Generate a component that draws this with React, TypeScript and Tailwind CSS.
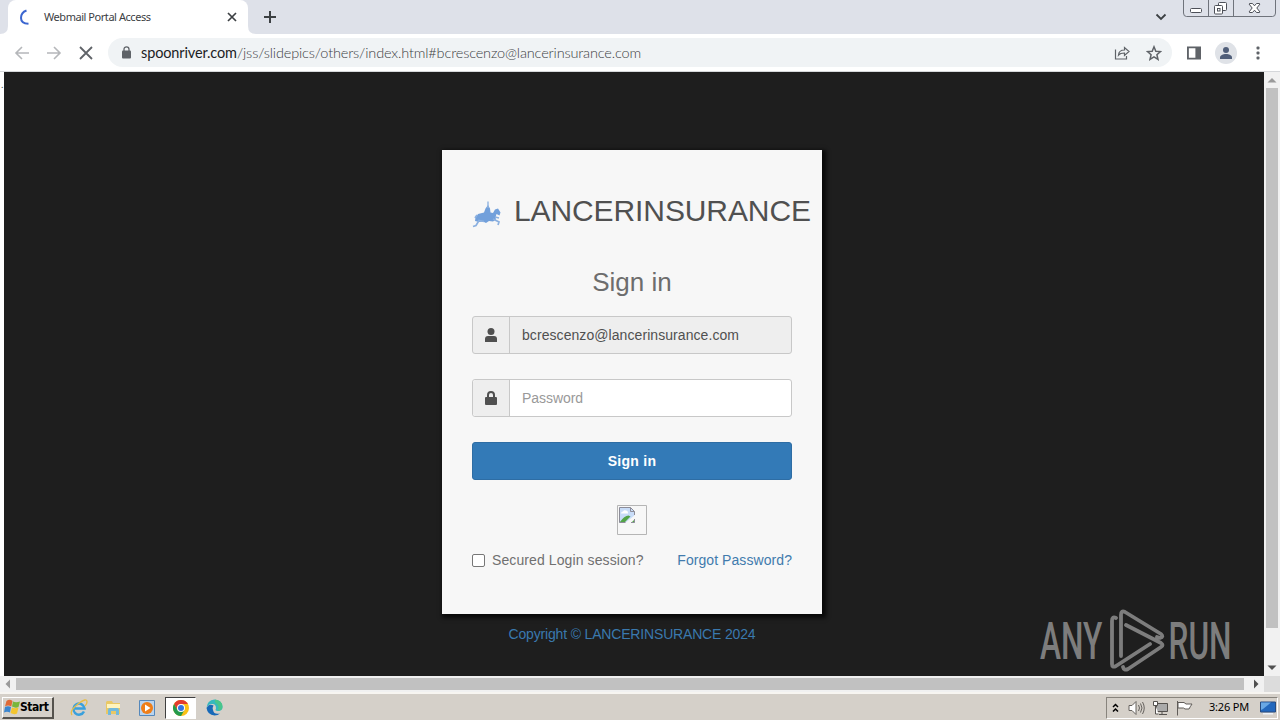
import React from "react";

function Tri({ d, c = "#505050" }: { d: string; c?: string }) {
  return (
    <svg width="16" height="16" viewBox="0 0 16 16" fill={c} className="shrink-0">
      <path d={d} />
    </svg>
  );
}

function TabStrip() {
  return (
    <div className="flex h-[34px] shrink-0 bg-[#dee1e9]">
      <div className="flex w-2 items-end">
        <svg width="8" height="34"><path d="M8 26v8H0q8 0 8-8" fill="#fff" /></svg>
      </div>
      <div className="flex w-60 items-center rounded-t-lg bg-white pl-[11px]">
        <svg width="16" height="16" viewBox="0 0 16 16" fill="none" stroke="#3b66d0" strokeWidth="2">
          <path d="M7.500 1.500Q2 3.500 2 9T9.500 14.800" />
        </svg>
        <span className="ml-[9px] w-[173px] whitespace-nowrap font-['Noto_Sans',sans-serif] text-[11px] tracking-[-0.45px] text-[#3c4043]">
          Webmail Portal Access
        </span>
        <svg className="ml-[10px]" width="10" height="10" viewBox="0 0 10 10" stroke="#3c4043" strokeWidth="1.7">
          <path d="M1 1l8 8M9 1L1 9" />
        </svg>
      </div>
      <div className="flex w-2 items-end">
        <svg width="8" height="34"><path d="M0 26v8h8q-8 0-8-8" fill="#fff" /></svg>
      </div>
      <div className="flex items-center pl-2">
        <svg width="12" height="12" viewBox="0 0 12 12" stroke="#3c4043" strokeWidth="2"><path d="M6 0v12M0 6h12" /></svg>
      </div>
      <div className="flex grow items-start justify-end">
        <svg className="mr-[16px] mt-[13px]" width="12" height="8" viewBox="0 0 12 8" fill="none" stroke="#3c4043" strokeWidth="1.8">
          <path d="M1.5 1.5L6 6l4.500-4.500" />
        </svg>
        <svg className="mr-1" width="93" height="17" viewBox="0 0 93 17" fill="none" stroke="#6f737b">
          <path d="M.5 0v13q0 3.500 3 3.500h86q3 0 3-3.500V0M25.500 0v16M50.500 0v16" />
          <rect x="7.500" y="8.500" width="11" height="4" rx="1" fill="#fff" stroke="#4d5058" />
          <g fill="#fff" stroke="#4d5058">
            <rect x="35.500" y="2.500" width="8" height="8" rx="1" />
            <rect x="31.500" y="5.500" width="8" height="8.500" rx="1" />
            <rect x="34.500" y="8.500" width="2.500" height="2.500" />
            <path d="M66.500 3.500h3l2 2.300 2-2.300h3l.5.5-3.200 4 3.200 4-.5.5h-3l-2-2.300-2 2.300h-3l-.5-.5 3.200-4-3.200-4z" />
          </g>
        </svg>
      </div>
    </div>
  );
}

function Toolbar() {
  return (
    <div className="flex h-[38px] shrink-0 items-center border-b border-[#d5d7da] bg-white">
      <svg className="ml-[14px]" width="80" height="16" viewBox="0 0 80 16" fill="none" strokeWidth="1.600">
        <g stroke="#b5b7ba">
          <path d="M15 8H2M8 2L2 8l6 6M33 8h13M40 2l6 6-6 6" />
        </g>
        <path d="M66 2l12 12M78 2L66 14" stroke="#5f6368" strokeWidth="1.800" />
      </svg>
      <div className="ml-[14px] flex h-[29px] w-[1064px] items-center rounded-full bg-[#f0f3f5] pl-[14px] pr-[10px]">
        <svg width="9" height="13" viewBox="0 0 9 13">
          <rect y="4.500" width="9" height="8" rx="1" fill="#5f6368" />
          <path d="M2 5V3.300a2.500 2.500 0 0 1 5 0V5" fill="none" stroke="#5f6368" strokeWidth="1.300" />
        </svg>
        <span className="ml-[10px] grow whitespace-nowrap font-['Lato',sans-serif] text-[14.5px] font-light tracking-[-0.15px] text-[#3c4043]">
          <span className="font-normal tracking-[-0.13px] text-[#202124]">spoonriver.com</span>/jss/slidepics/others/index.html#bcrescenzo@lancerinsurance.com
        </span>
        <svg width="16" height="16" viewBox="0 0 16 16" fill="none" stroke="#5f6368" strokeWidth="1.200">
          <path d="M1.500 4.500v9.500h11v-3M4.500 10c.3-3.500 2.500-5 6-5V2.500l4.500 4-4.500 4V8c-3 0-4.700.4-6 2z" />
        </svg>
        <svg className="ml-4" width="16" height="16" viewBox="0 0 16 16" fill="none" stroke="#5f6368" strokeWidth="1.500">
          <path d="M8 1.800l1.800 4.400 4.700.4-3.600 3.100 1.100 4.600L8 11.800l-4 2.500 1.100-4.600-3.600-3.100 4.700-.4z" />
        </svg>
      </div>
      <svg className="ml-[15px]" width="14" height="14" viewBox="0 0 15 14">
        <path d="M1 1h13v12H1z" fill="#fff" stroke="#5f6368" strokeWidth="2" />
        <path d="M9 1h5v12H9z" fill="#5f6368" />
      </svg>
      <svg className="ml-[14px]" width="22" height="22" viewBox="0 0 22 22">
        <circle cx="11" cy="11" r="11" fill="#dfe2e7" />
        <g fill="#505e79"><circle cx="11" cy="8" r="3" /><path d="M5 17v-1.500c0-2 3-3.500 6-3.500s6 1.500 6 3.500V17z" /></g>
      </svg>
      <svg className="ml-[19px]" width="4" height="14" viewBox="0 0 4 14" fill="#5f6368">
        <rect x=".5" y=".5" width="3" height="3" rx="1" /><rect x=".5" y="5.500" width="3" height="3" rx="1" /><rect x=".5" y="10.500" width="3" height="3" rx="1" />
      </svg>
    </div>
  );
}

function Rider() {
  return (
    <svg className="mt-[5px] shrink-0" width="30" height="30" viewBox="0 0 30 30">
      <path d="M4 17l2-3 6-1.500 1.500-4L16 5l2 3.500.5 4L21 13l2-3.500L26 8.500l2.500 4-1 3-3-1.500-1 3.500.5 2-3 2-4-.5-3 2-3-1.500-4 .5-4-1 .5-3.500z" fill="#72a0db" />
      <path d="M1 26.500l3-1 3-5 5 1M21 19l6 3-1 3M3 18l2-3M23 17l4 1" fill="none" stroke="#8bb0e0" strokeWidth="1.700" />
      <path d="M16 1.500V8" stroke="#91b4e0" strokeWidth="1.400" />
    </svg>
  );
}

function LoginCard() {
  return (
    <div className="h-[464px] w-[380px] shrink-0 bg-[#f7f7f7] px-[30px] font-['Liberation_Sans',sans-serif] text-[14px] text-[#707070] shadow-[2px_2px_4px_2px_rgba(0,0,0,0.7)]">
      <div className="flex h-[124px] items-center whitespace-nowrap text-[#505050]">
        <Rider />
        <span className="ml-3 pb-[2px] text-[30px] leading-none tracking-[-0.1px]">LANCERINSURANCE</span>
      </div>
      <div className="h-[42px] text-center text-[26px] leading-[17px] text-[#6d6d6d]">Sign in</div>
      <div className="flex h-[38px] rounded-[3px] border border-[#c8c8c8] bg-[#eee]">
        <div className="flex w-[37px] items-center justify-center border-r border-[#c8c8c8]">
          <svg width="12" height="14" viewBox="0 0 12 14" fill="#505050">
            <circle cx="6" cy="3.500" r="3.500" /><path d="M0 14v-3q0-3 3-3h6q3 0 3 3v3z" />
          </svg>
        </div>
        <span className="flex items-center pl-3 text-[14px] tracking-[0.07px] text-[#505050]">bcrescenzo@lancerinsurance.com</span>
      </div>
      <div className="mt-[25px] flex h-[38px] rounded-[3px] border border-[#c8c8c8] bg-white">
        <div className="flex w-[37px] items-center justify-center rounded-l-[3px] border-r border-[#c8c8c8] bg-[#eee]">
          <svg width="12" height="14" viewBox="0 0 12 14">
            <rect y="6" width="12" height="8" rx="1" fill="#505050" />
            <path d="M3 7V4a3 3 0 0 1 6 0v3" fill="none" stroke="#505050" strokeWidth="2" />
          </svg>
        </div>
        <span className="flex items-center pl-3 tracking-[-0.05px] text-[#999]">Password</span>
      </div>
      <button className="mt-[25px] flex h-[38px] w-full items-center justify-center rounded-[3px] border border-[#2e6da4] bg-[#337ab7] text-[14px] font-bold tracking-[0.28px] text-white">
        Sign in
      </button>
      <svg className="mx-auto mt-[25px]" width="30" height="30" viewBox="0 0 30 30">
        <path d="M.5.5h29v29H.5z" fill="none" stroke="#b5b5b5" />
        <path d="M2.500 2.500h11l4 4v11h-15z" fill="#c8dcf8" />
        <path d="M4 8.500q0-2 2-2 1-2 3-1 2 0 2 3z" fill="#fff" />
        <path d="M2.500 17.500q5-7 9-7l2 1-6 6z" fill="#52a447" />
        <path d="M17.500 17.500v-4l-4 4" fill="#52a447" />
        <path d="M8 18l10-8v4l-4 4z" fill="#f7f7f7" />
        <path d="M17.500 10V6.500l-4-4h-11v15h6M13.500 2.500v4h4M14 17.500h3.500V14" fill="none" stroke="#8c8c98" />
      </svg>
      <div className="mt-4 flex h-[19px] items-center">
        <span className="h-[13px] w-[13px] rounded-[2px] border border-[#777] bg-white" />
        <span className="ml-[7px] pb-px leading-[18px] tracking-[0.1px]">Secured Login session?</span>
        <span className="ml-auto pb-px leading-[18px] tracking-[0.07px] text-[#417bad]">Forgot Password?</span>
      </div>
    </div>
  );
}

function AnyRun() {
  return (
    <div className="absolute left-[1031px] top-[536px] flex h-[66px] w-[204px] items-center font-['Roboto',sans-serif] text-[51px] font-medium leading-none text-[#7d7d7d]">
      <span className="w-[74px] shrink-0 origin-left scale-x-[0.62] pl-2">ANY</span>
      <svg className="shrink-0" width="56" height="64" viewBox="0 0 56 64" fill="none" stroke="#7d7d7d" strokeWidth="3.800" strokeLinejoin="round" strokeLinecap="round">
        <path d="M7 9q-4-2-4 3v43q0 4 4 2l34-22M12 47V6q0-5 4-3l36 22q3 3-1 4l-3-1M17 16l35 18q3 2 0 4L19 60q-4 2-5-2" />
      </svg>
      <span className="ml-px w-[60px] shrink-0 origin-left scale-x-[0.62] pl-1">RUN</span>
    </div>
  );
}

function Viewport() {
  return (
    <div className="flex h-[620px] shrink-0 flex-col bg-white">
      <div className="flex h-[604px]">
        <div className="w-1 shrink-0 pl-px pt-[8px] text-[9px] leading-none text-[#333]">.</div>
        <div className="relative flex w-[1260px] flex-col items-center bg-[#1e1e1e] pr-1 pt-[78px]">
          <LoginCard />
          <span className="mt-[11px] font-['Liberation_Sans',sans-serif] text-[14px] leading-[18px] tracking-[-0.17px] text-[#3a79ae]">
            Copyright © LANCERINSURANCE 2024
          </span>
          <AnyRun />
        </div>
        <div className="flex w-4 flex-col bg-[#f1f1f1]">
          <Tri d="M3.500 10.500h9L8 6z" c="#9a9a9a" />
          <div className="mx-[2px] h-[540px] bg-[#c1c1c1]" />
          <div className="grow" />
          <Tri d="M3.500 5.500h9L8 10z" />
        </div>
      </div>
      <div className="flex h-4 bg-[#f1f1f1]">
        <Tri d="M10 3.500v9L5.500 8z" c="#9a9a9a" />
        <div className="my-[2px] w-[1228px] bg-[#c1c1c1]" />
        <div className="w-1" />
        <Tri d="M6 3.500v9L10.500 8z" />
        <div className="w-4 bg-[#dcdcdc]" />
      </div>
    </div>
  );
}

function Flag() {
  return (
    <svg width="16" height="16" viewBox="0 0 16 16" className="shrink-0">
      <path d="M2.500 2q3-2.500 6 0L7.300 7.500Q4 5.500 1 7.500z" fill="#df6a37" />
      <path d="M9 2.500q3 1.500 7 0L14.500 8q-3 1.500-6.500-.5z" fill="#79b63b" />
      <path d="M1 8q3-1.500 6 0l-1 5.500Q3 12 0 13.500z" fill="#3b86cf" />
      <path d="M8 8.500q3 1.500 6.500 0L13 14.500q-3 1.500-6.500-.5z" fill="#f3c52f" />
    </svg>
  );
}

function Taskbar() {
  return (
    <div className="flex h-7 shrink-0 items-center border-t-2 border-[#f7f5f1] bg-[#d5d0c9] pt-px">
      <div className="ml-[2px] flex h-[22px] w-[52px] items-center border border-b-2 border-r-2 border-b-[#55524d] border-l-white border-r-[#55524d] border-t-white pl-px">
        <Flag />
        <span className="font-['DejaVu_Sans_Condensed','DejaVu_Sans',sans-serif] text-[12px] font-bold tracking-[-0.45px] text-black">Start</span>
      </div>
      <svg className="ml-[16px]" width="18" height="18" viewBox="0 0 18 18" fill="none">
        <path d="M14 12.500A5.500 5.500 0 1 1 14.500 9.500H5" stroke="#3aa0dc" strokeWidth="2.500" />
        <path d="M2 16Q-1 12 8 5T17 3q0 2-2 4" stroke="#e8bd45" strokeWidth="1.300" />
      </svg>
      <svg className="ml-[17px]" width="17" height="18" viewBox="0 0 17 18">
        <path d="M1 3l1-1h5l1 2h7v11H1z" fill="#e9c865" />
        <path d="M2 5h13v4H2z" fill="#fff4bd" />
        <path d="M3 16v-5q0-2 2-2h7q2 0 2 2v5h-3v-4H6v4z" fill="#72b9dc" />
      </svg>
      <svg className="ml-[17px]" width="16" height="16" viewBox="0 0 16 16">
        <path d="M.5.5h15v15H.5z" fill="#b9d4ef" stroke="#5588bb" />
        <circle cx="8" cy="8" r="6" fill="#ef7e18" /><path d="M6 4.500v7L11.500 8z" fill="#fff" />
      </svg>
      <div className="ml-[10px] flex h-[22px] w-[31px] items-center justify-center border border-b-white border-l-[#404040] border-r-white border-t-[#404040] bg-white">
        <svg width="16" height="16" viewBox="0 0 16 16">
          <circle cx="8" cy="8" r="8" fill="#fbc116" />
          <path d="M1.070 4A8 8 0 0 1 14.930 4H8L4.500 10z" fill="#e33b2e" />
          <path d="M1.070 4A8 8 0 0 0 8 16l3.500-6h-7z" fill="#249a4d" />
          <circle cx="8" cy="8" r="4" fill="#fff" /><circle cx="8" cy="8" r="3" fill="#3475e0" />
        </svg>
      </div>
      <svg className="ml-[10px]" width="17" height="17" viewBox="0 0 17 17">
        <path d="M.5 9Q1 1 8.500.5q7.500.5 8 7.500 0 4-4.500 4-3.500 0-2-2.500Q10 4.500 6 5 2 5 .5 9" fill="#35b8be" />
        <path d="M.5 9Q3 4 7.500 6.500 6 9 7 11q1 5 7 3.500-2 2-5.500 2-7-.5-8-7.500" fill="#1769b8" />
        <path d="M9 .5q7 .5 7.500 7 0 4-4.500 4 2-5-3-8" fill="#48c58c" />
      </svg>
      <div className="ml-auto mr-[2px] flex h-[22px] w-[172px] items-center border border-b-white border-l-[#88847d] border-r-white border-t-[#88847d]">
        <svg className="ml-[5px]" width="7" height="10" viewBox="0 0 7 10" fill="none" stroke="#000" strokeWidth="1.500"><path d="M1 4l2.500-2.500L6 4M1 8.500L3.500 6 6 8.500" /></svg>
        <svg className="ml-[9px]" width="17" height="16" viewBox="0 0 17 16" fill="none" stroke="#66625e">
          <path d="M1 5.500h3l4-4v13l-4-4H1z" fill="#fff" /><path d="M10.500 5q2 3 0 6M12.500 3.500q3 4.500 0 9M14.500 2q3.500 6 0 12" />
        </svg>
        <svg className="ml-[7px]" width="17" height="16" viewBox="0 0 17 16" fill="#fff" stroke="#55524f">
          <path d="M4.500 3.500h11v8h-11z" fill="#aaa" /><path d="M7 14.500h8M10 12v2M3.500 5v9h3" /><path d="M1.500 1.500h4v4h-4z" />
        </svg>
        <svg className="ml-[7px]" width="17" height="16" viewBox="0 0 17 16" fill="#fff" stroke="#605c58">
          <path d="M1.500 1v14.500M2 2.500h6l2 1.500h6q-2 3-3 5H9L7.500 8H2z" />
        </svg>
        <span className="ml-[16px] whitespace-nowrap font-['Noto_Sans',sans-serif] text-[11px] tracking-[-0.2px] text-black">3:26 PM</span>
        <svg className="ml-[11px] shrink-0" width="16" height="14" viewBox="0 0 16 14">
          <path d="M.5 1h15v10H.5z" fill="#2368bd" stroke="#264b80" /><path d="M1 1.500h10L3 8 1 9z" fill="#69a8e5" /><path d="M3 12h10v1.500H3z" fill="#edf2f8" />
        </svg>
      </div>
    </div>
  );
}

export default function App() {
  return (
    <div className="flex h-[720px] w-[1280px] flex-col overflow-hidden bg-white">
      <TabStrip />
      <Toolbar />
      <Viewport />
      <Taskbar />
    </div>
  );
}
